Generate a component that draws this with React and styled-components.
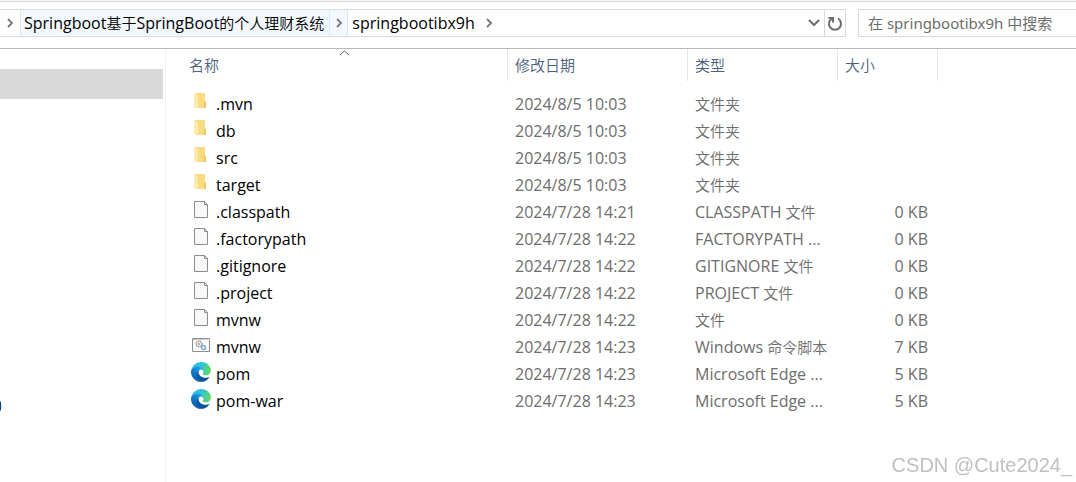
import React from "react";
import styled, { createGlobalStyle } from "styled-components";

const GlobalStyle = createGlobalStyle`
  * { box-sizing: border-box; }
  body {
    margin: 0;
    background: #fff;
    color: #000;
    font: 16px/20px "Open Sans", "Noto Sans CJK SC", sans-serif;
  }
  button, input { font: inherit; color: inherit; }
`;

const Explorer = styled.main`
  display: flex;
  flex-direction: column;
  min-height: 100vh;
  overflow: hidden;
  border-top: 1px solid #f5f5f5;
`;

const Toolbar = styled.header`
  display: flex;
  gap: 12px;
  padding: 7px 0 11px;
  border-top: 1px solid #d9d9d9;
  border-bottom: 1px solid #b9b9b9;
`;

const AddressBar = styled.nav`
  flex: 1;
  display: flex;
  height: 28px;
  border: 1px solid #d9d9d9;
  border-left: 0;
`;

const Crumb = styled.button`
  padding: 0 5px 0 3px;
  border: 0;
  border-left: 1px solid ${(p) => (p.$active ? "#d8ebf9" : "transparent")};
  background: ${(p) => (p.$active ? "#f2f8fd" : "transparent")};
  white-space: nowrap;
`;

const CrumbArrow = styled.button`
  display: flex;
  align-items: center;
  justify-content: center;
  width: ${(p) => (p.$wide ? 20 : 19)}px;
  padding: 0;
  border: 0;
  border-left: 1px solid ${(p) => (p.$active ? "#d8ebf9" : "transparent")};
  border-right: 1px solid ${(p) => (p.$active ? "#d8ebf9" : "transparent")};
  background: ${(p) => (p.$active ? "#f2f8fd" : "transparent")};
`;

const BarButton = styled.button`
  display: flex;
  align-items: center;
  justify-content: center;
  width: ${(p) => (p.$divided ? 21 : 20)}px;
  margin-left: ${(p) => (p.$divided ? 0 : "auto")};
  padding: 0;
  border: 0;
  border-left: ${(p) => (p.$divided ? "1px solid #d9d9d9" : "0")};
  background: none;
`;

const SearchBox = styled.input`
  width: 218px;
  height: 28px;
  padding: 0 9px;
  border: 1px solid #d9d9d9;
  border-right: 0;
  border-radius: 0;
  background: #fff;
  font-family: "Noto Sans", "Noto Sans CJK SC", sans-serif;
  font-size: 15px;
  &::placeholder { color: #6d6d6d; opacity: 1; }
`;

const Body = styled.div`
  flex: 1;
  display: flex;
`;

const Sidebar = styled.aside`
  flex: 0 0 166px;
  display: flex;
  flex-direction: column;
  padding: 20px 2px 0 0;
  border-right: 1px solid #f3f3f3;
`;

const SelectedItem = styled.div`
  height: 30px;
  background: #d9d9d9;
`;

const SidebarDot = styled.svg`
  margin-top: 302px;
`;

const Pane = styled.section`
  flex: 1;
  min-width: 0;
`;

const FileTable = styled.table`
  table-layout: fixed;
  width: 772px;
  border-collapse: separate;
  border-spacing: 0;
`;

const Column = styled.col`
  width: ${(p) => p.$width}px;
`;

const HeaderCell = styled.th`
  position: relative;
  height: 32px;
  padding: 0 0 0 ${(p) => p.$indent || 7}px;
  border-right: 1px solid #e5e5e5;
  color: #4c607a;
  font-size: 15px;
  font-weight: 350;
  text-align: left;
`;

const SortMark = styled.svg`
  position: absolute;
  top: 1px;
  left: calc(50% + 2px);
`;

const SpacerCell = styled.td`
  height: 9px;
  padding: 0;
`;

const Cell = styled.td`
  height: 27px;
  padding: 0 10px 0 7px;
  color: #6d6d6d;
  text-align: ${(p) => p.$align || "left"};
  white-space: nowrap;
  overflow: hidden;
`;

const Chinese = styled.span`
  font-size: 15px;
  font-weight: 350;
`;

const FileName = styled.div`
  display: flex;
  align-items: center;
  gap: 5px;
  padding-left: 18px;
  color: #000;
  svg { margin-bottom: 3px; }
`;

const Watermark = styled.div`
  position: fixed;
  right: 4px;
  bottom: 5px;
  color: #c0c0c0;
  font: 20px/24px "Liberation Sans", sans-serif;
`;

const MixedText = ({ children }) =>
  children
    .split(/([\u4e00-\u9fff]+)/)
    .map((part, i) => (i % 2 ? <Chinese key={i}>{part}</Chinese> : part));

const Chevron = () => (
  <svg width="8" height="10" viewBox="0 0 8 10" fill="none" stroke="#777" strokeWidth="1.8">
    <path d="M2 1l4 4-4 4" />
  </svg>
);

const FolderIcon = () => (
  <svg width="20" height="20" viewBox="0 0 20 20">
    <path d="M4 1h10v8h1v7H6z" fill="#f9db80" />
    <path d="M13 10h2v6h-2z" fill="#edc766" />
    <path d="M3 1l4 3v13l-4-2z" fill="#ffebaf" />
  </svg>
);

const PageIcon = () => (
  <svg width="20" height="20" viewBox="0 0 20 20">
    <path d="M3.500 1.500h10l3 3v13h-13z" fill="#f7f8f8" stroke="#8d8d8d" />
    <path d="M13.500 1.500v3h3" fill="none" stroke="#8d8d8d" />
  </svg>
);

const ScriptIcon = () => (
  <svg width="20" height="20" viewBox="0 0 20 20">
    <path d="M1.500 3.500h17v13h-17z" fill="#fafafa" stroke="#8d8d8d" />
    <path d="M2 4.500h16" stroke="#c4c4c4" />
    <path d="M13 4.500h1m1 0h1m1 0h1" stroke="#fff" />
    <circle cx="8" cy="9" r="2.800" fill="none" stroke="#8a949c" strokeWidth="1.400" strokeDasharray="1.400 .6" />
    <circle cx="8" cy="9" r="1" fill="#8a949c" />
    <circle cx="12.500" cy="12.500" r="2" fill="#fff" stroke="#79add0" strokeWidth="1.400" />
  </svg>
);

const EdgeIcon = () => (
  <svg width="20" height="20" viewBox="0 0 256 256">
    <defs>
      <linearGradient id="edgeDeep" x1="60" y1="176" x2="236" y2="176" gradientUnits="userSpaceOnUse">
        <stop stopColor="#0c59a4" />
        <stop offset="1" stopColor="#114a8b" />
      </linearGradient>
      <linearGradient id="edgeBlue" x1="150" y1="100" x2="45" y2="215" gradientUnits="userSpaceOnUse">
        <stop stopColor="#1b9de2" />
        <stop offset=".4" stopColor="#1488d5" />
        <stop offset="1" stopColor="#0b63b9" />
      </linearGradient>
      <linearGradient id="edgeGreen" x1="20" y1="70" x2="245" y2="130" gradientUnits="userSpaceOnUse">
        <stop stopColor="#35b9f1" />
        <stop offset=".45" stopColor="#2fc2d8" />
        <stop offset="1" stopColor="#66dc5a" />
      </linearGradient>
    </defs>
    <path fill="url(#edgeDeep)" d="M231 190.500c-3.400 1.800-6.900 3.400-10.500 4.700a101.700 101.700 0 0 1-35.900 6.500c-47.300 0-88.500-32.500-88.500-74.300a31.500 31.500 0 0 1 16.400-27.300c-42.800 1.800-53.800 46.400-53.800 72.500 0 74 68.100 81.400 82.800 81.400 7.900 0 19.800-2.300 27-4.600l1.300-.4a128.300 128.300 0 0 0 66.600-52.800 4 4 0 0 0-5.400-5.700z" />
    <path fill="url(#edgeBlue)" d="M105.700 241.400a79.200 79.200 0 0 1-22.700-21.300 80.700 80.700 0 0 1 29.500-120c3.200-1.500 8.500-4.100 15.600-4a32.400 32.400 0 0 1 25.700 13 31.900 31.900 0 0 1 6.300 18.700c0-.2 24.500-79.600-80-79.600-43.900 0-80 41.700-80 78.200a130.200 130.200 0 0 0 12.100 56 128 128 0 0 0 156.400 67 75.500 75.500 0 0 1-62.800-8z" />
    <path fill="url(#edgeGreen)" d="M152.300 148.900c-.9 1-3.400 2.500-3.400 5.600 0 2.600 1.700 5.200 4.800 7.300 14.300 10 41.400 8.600 41.500 8.600a59.600 59.600 0 0 0 30.300-8.300 61.400 61.400 0 0 0 30.400-52.900c.3-22.400-8-37.300-11.300-43.900C223.500 23.900 177.700 0 128 0A128 128 0 0 0 0 126.200c.5-36.500 36.800-66 80-66 3.500 0 23.500.3 42 10 16.300 8.600 24.900 19 30.800 29.300 6.200 10.700 7.300 24.100 7.300 29.500 0 5.300-2.700 13.300-7.800 19.900z" />
  </svg>
);

const icons = { folder: FolderIcon, page: PageIcon, script: ScriptIcon, edge: EdgeIcon };

const files = [
  ["folder", ".mvn", "2024/8/5 10:03", "文件夹", ""],
  ["folder", "db", "2024/8/5 10:03", "文件夹", ""],
  ["folder", "src", "2024/8/5 10:03", "文件夹", ""],
  ["folder", "target", "2024/8/5 10:03", "文件夹", ""],
  ["page", ".classpath", "2024/7/28 14:21", "CLASSPATH 文件", "0 KB"],
  ["page", ".factorypath", "2024/7/28 14:22", "FACTORYPATH ...", "0 KB"],
  ["page", ".gitignore", "2024/7/28 14:22", "GITIGNORE 文件", "0 KB"],
  ["page", ".project", "2024/7/28 14:22", "PROJECT 文件", "0 KB"],
  ["page", "mvnw", "2024/7/28 14:22", "文件", "0 KB"],
  ["script", "mvnw", "2024/7/28 14:23", "Windows 命令脚本", "7 KB"],
  ["edge", "pom", "2024/7/28 14:23", "Microsoft Edge ...", "5 KB"],
  ["edge", "pom-war", "2024/7/28 14:23", "Microsoft Edge ...", "5 KB"],
];

export default function App() {
  return (
    <Explorer>
      <GlobalStyle />
      <Toolbar>
        <AddressBar aria-label="地址">
          <CrumbArrow $wide aria-label="展开"><Chevron /></CrumbArrow>
          <Crumb $active><MixedText>Springboot基于SpringBoot的个人理财系统</MixedText></Crumb>
          <CrumbArrow $active aria-label="展开"><Chevron /></CrumbArrow>
          <Crumb>springbootibx9h</Crumb>
          <CrumbArrow aria-label="展开"><Chevron /></CrumbArrow>
          <BarButton aria-label="历史记录">
            <svg width="12" height="8" viewBox="0 0 12 8" fill="none" stroke="#6d6d6d" strokeWidth="2">
              <path d="M1 1l5 5 5-5" />
            </svg>
          </BarButton>
          <BarButton $divided aria-label="刷新">
            <svg width="16" height="16" viewBox="0 0 16 16" fill="none" stroke="#6d6d6d" strokeWidth="2">
              <path d="M11 3.500a6 6 0 1 1-6 0M1.500 3h4.500v4.500" />
            </svg>
          </BarButton>
        </AddressBar>
        <SearchBox type="search" aria-label="搜索" placeholder="在 springbootibx9h 中搜索" />
      </Toolbar>
      <Body>
        <Sidebar>
          <SelectedItem />
          <SidebarDot width="2" height="10" viewBox="0 0 2 10"><ellipse cx="0" cy="5" rx="1.200" ry="5" fill="#0a3f97" /></SidebarDot>
        </Sidebar>
        <Pane>
          <FileTable>
            <colgroup>
              <Column $width={342} />
              <Column $width={180} />
              <Column $width={150} />
              <Column $width={100} />
            </colgroup>
            <thead>
              <tr>
                <HeaderCell $indent={23}>
                  名称
                  <SortMark width="11" height="6" viewBox="0 0 11 6" fill="none" stroke="#666"><path d="M1 5l4.500-4L10 5" /></SortMark>
                </HeaderCell>
                <HeaderCell>修改日期</HeaderCell>
                <HeaderCell>类型</HeaderCell>
                <HeaderCell>大小</HeaderCell>
              </tr>
            </thead>
            <tbody>
              <tr aria-hidden="true"><SpacerCell colSpan={4} /></tr>
              {files.map(([icon, name, date, type, size], i) => {
                const Icon = icons[icon];
                return (
                  <tr key={i}>
                    <Cell><FileName><Icon />{name}</FileName></Cell>
                    <Cell>{date}</Cell>
                    <Cell><MixedText>{type}</MixedText></Cell>
                    <Cell $align="right">{size}</Cell>
                  </tr>
                );
              })}
            </tbody>
          </FileTable>
        </Pane>
      </Body>
      <Watermark>CSDN @Cute2024_</Watermark>
    </Explorer>
  );
}
